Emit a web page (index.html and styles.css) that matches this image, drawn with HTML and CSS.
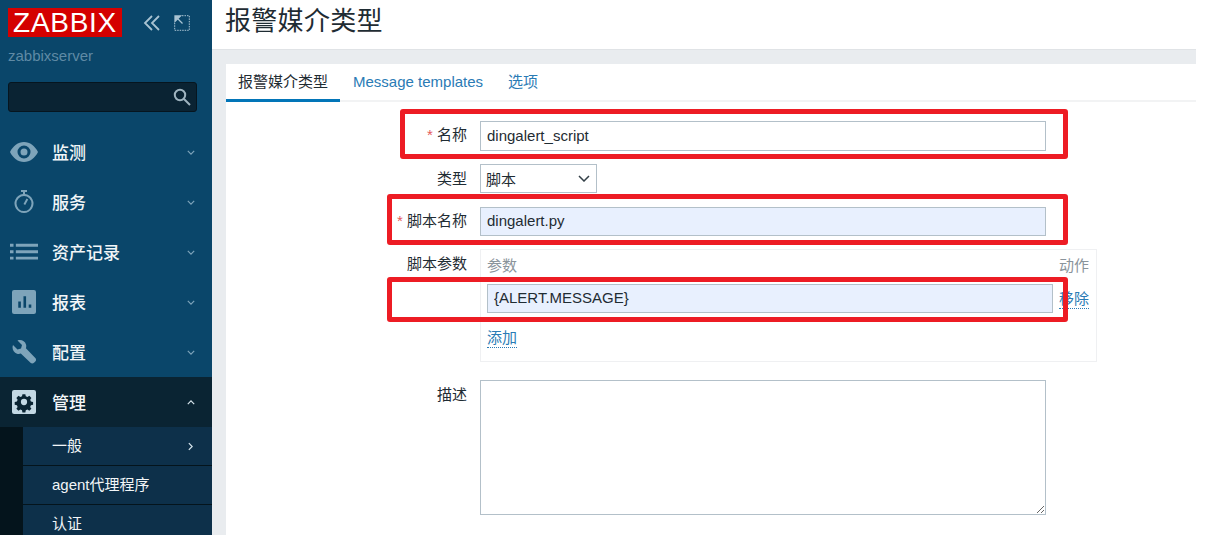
FILE: index.html
```html
<!DOCTYPE html>
<html lang="zh-CN">
<head>
  <meta charset="UTF-8" />
  <meta name="viewport" content="width=device-width, initial-scale=1.0" />
  <title>报警媒介类型</title>
  <link rel="stylesheet" href="styles.css">
</head>
<body>
  <aside class="sidebar">
    <div class="brand">
      <div class="logo">ZABBIX</div>
      <svg class="tool-icon chevrons" viewBox="0 0 18 18"><path d="M9 2 2 9l7 7M16 2 9 9l7 7" /></svg>
      <svg class="tool-icon expand" viewBox="0 0 16 16">
        <path class="dotted" d="M8 .7h7.3V15.3H.7V8" />
        <path class="solid" d="M1 1h5.500L1 6.500zM4 4l4.500 4.500" />
      </svg>
    </div>
    <div class="server">zabbixserver</div>
    <div class="search">
      <svg viewBox="0 0 18 18"><circle cx="7" cy="7" r="5.200" /><path d="m11 11 6 6" /></svg>
    </div>

    <nav class="menu">
      <a class="menu-item">
        <svg class="menu-icon" viewBox="0 0 28 20"><path fill-rule="evenodd" d="M14 0c6 0 11 4 14 10-3 6-8 10-14 10S3 16 0 10C3 4 8 0 14 0Zm0 3.500a6.500 6.500 0 1 0 0 13 6.500 6.500 0 0 0 0-13Zm0 3a3.500 3.500 0 1 1 0 7 3.500 3.500 0 0 1 0-7Z" /></svg>
        <span>监测</span>
        <svg class="caret" viewBox="0 0 10 6"><path d="m1 1 4 4 4-4" /></svg>
      </a>
      <a class="menu-item">
        <svg class="menu-icon" viewBox="0 0 22 24"><path fill-rule="evenodd" d="M8 0h6v2h-2v2.100a9.500 9.500 0 1 1-2 0V2H8Zm3 6.100a7.500 7.500 0 1 0 0 15 7.500 7.500 0 0 0 0-15Zm2.500 2.500 1.700 1-3 5.300-1.700-1Z" /></svg>
        <span>服务</span>
        <svg class="caret" viewBox="0 0 10 6"><path d="m1 1 4 4 4-4" /></svg>
      </a>
      <a class="menu-item">
        <svg class="menu-icon" viewBox="0 0 24 14"><path d="M0 0h3v2.500H0zM5 0h19v2.500H5zM0 5.500h3V8H0zM5 5.500h19V8H5zM0 11h3v2.500H0zM5 11h19v2.500H5z" /></svg>
        <span>资产记录</span>
        <svg class="caret" viewBox="0 0 10 6"><path d="m1 1 4 4 4-4" /></svg>
      </a>
      <a class="menu-item">
        <svg class="menu-icon" viewBox="0 0 23 23"><path fill-rule="evenodd" d="M2 0h19a2 2 0 0 1 2 2v19a2 2 0 0 1-2 2H2a2 2 0 0 1-2-2V2a2 2 0 0 1 2-2Zm4 11v6h2.500v-6Zm5-5v11h2.500V6Zm5 8v3h2.500v-3Z" /></svg>
        <span>报表</span>
        <svg class="caret" viewBox="0 0 10 6"><path d="m1 1 4 4 4-4" /></svg>
      </a>
      <a class="menu-item">
        <svg class="menu-icon" viewBox="0 0 24 24"><path d="M1 5 5.500 9.500 9 8.500l1-3.500L5.500.5C9-.8 13 1 14 4.500c.4 1.300.3 2.600-.1 3.700L23.300 18c1 1 1 2.500 0 3.500l-1.300 1.300c-1 1-2.500 1-3.500 0L8.800 13.500C7.600 14 6.200 14 5 13.700 1.500 12.600-.4 8.700 1 5Z" /></svg>
        <span>配置</span>
        <svg class="caret" viewBox="0 0 10 6"><path d="m1 1 4 4 4-4" /></svg>
      </a>
      <a class="menu-item active">
        <svg class="menu-icon" viewBox="0 0 23 23"><path fill-rule="evenodd" d="M2 0h19a2 2 0 0 1 2 2v19a2 2 0 0 1-2 2H2a2 2 0 0 1-2-2V2a2 2 0 0 1 2-2Zm8 4-.4 2.100-1.600.7-1.800-1.200-2 2 1.200 1.800-.7 1.600-2.100.4v2.800l2.100.4.7 1.600-1.200 1.800 2 2 1.800-1.200 1.600.7.400 2.100h2.800l.4-2.100 1.600-.7 1.800 1.200 2-2-1.200-1.800.7-1.600 2.100-.4v-2.800l-2.100-.4-.7-1.600 1.200-1.800-2-2-1.800 1.200-1.600-.7L12.800 4Zm1.500 4.500a3 3 0 1 1 0 6 3 3 0 0 1 0-6Z" /></svg>
        <span>管理</span>
        <svg class="caret" viewBox="0 0 10 6"><path d="m1 5 4-4 4 4" /></svg>
      </a>
      <div class="submenu">
        <a class="sub-item">一般<svg class="caret-right" viewBox="0 0 6 10"><path d="m1 1 4 4-4 4" /></svg></a>
        <a class="sub-item">agent代理程序</a>
        <a class="sub-item">认证</a>
      </div>
    </nav>
  </aside>

  <main class="main">
    <header class="page-header"><h1>报警媒介类型</h1></header>
    <div class="content">
      <section class="panel">
        <div class="tabs">
          <a class="tab active">报警媒介类型</a>
          <a class="tab">Message templates</a>
          <a class="tab">选项</a>
        </div>
        <form class="form">
          <label class="row-label"><i>*</i> 名称</label>
          <input class="field name-field" type="text" value="dingalert_script" />

          <label class="row-label type-label">类型</label>
          <div class="field type-field">
            <span>脚本</span>
            <svg viewBox="0 0 12 7"><path d="m1 1 5 5 5-5" /></svg>
          </div>

          <label class="row-label"><i>*</i> 脚本名称</label>
          <input class="field filled" type="text" value="dingalert.py" />

          <label class="row-label params-label">脚本参数</label>
          <div class="params">
            <div class="params-head"><span>参数</span><span>动作</span></div>
            <div class="params-row">
              <input class="field filled" type="text" value="{ALERT.MESSAGE}" />
              <a class="link">移除</a>
            </div>
            <a class="link add-link">添加</a>
          </div>

          <label class="row-label desc-label">描述</label>
          <textarea class="field desc"></textarea>
        </form>
      </section>
    </div>
  </main>

  <!-- annotations drawn over the screenshot -->
  <div class="mark mark-name"></div>
  <div class="mark mark-script"></div>
  <div class="mark mark-param"></div>
</body>
</html>
```

FILE: styles.css
```css
* {
  box-sizing: border-box;
}
html, body {
  height: 100%;
}
body {
  margin: 0;
  display: flex;
  overflow: hidden;
  background: white;
  color: #1f2c33;
  font-family: "Liberation Sans", "Noto Sans CJK SC", sans-serif;
  font-size: 15px;
}

/* sidebar */
.sidebar {
  flex: 0 0 212px;
  background: #0a466a;
  color: #f2f6f8;
}
.brand {
  display: flex;
  align-items: flex-start;
  padding: 8px 0 0 8px;
}
.logo {
  width: 114px;
  height: 29px;
  background: #d40000;
  color: white;
  font-size: 28px;
  line-height: 30px;
  letter-spacing: 0.7px;
  text-align: center;
}
.tool-icon {
  fill: none;
  stroke: #a9c3d2;
}
.chevrons {
  width: 18px;
  height: 18px;
  margin: 6px 0 0 21px;
  stroke-width: 1.800;
}
.expand {
  width: 16px;
  height: 16px;
  margin: 7px 0 0 13px;
}
.expand .dotted {
  stroke-dasharray: 1.500 1;
}
.expand .solid {
  fill: #a9c3d2;
  stroke-width: 1.300;
}
.server {
  margin: 9px 0 0 8px;
  color: #5f8aa5;
  font-size: 15px;
  line-height: 20px;
}
.search {
  display: flex;
  justify-content: flex-end;
  align-items: center;
  width: 189px;
  height: 30px;
  margin: 16px 0 0 8px;
  padding-right: 5px;
  background: #0a2333;
  border: 1px solid #06151f;
  border-radius: 3px;
}
.search svg {
  width: 18px;
  height: 18px;
  fill: none;
  stroke: #9fb4c0;
  stroke-width: 2;
}
.menu {
  margin-top: 15px;
}
.menu-item {
  display: flex;
  align-items: center;
  height: 50px;
  padding: 0 17px 0 0;
  font-size: 17px;
}
.menu-item span {
  flex: 1;
  padding-bottom: 2px;
  font-weight: 500;
}
.menu-icon {
  flex: none;
  width: 28px;
  height: 24px;
  margin: 0 14px 0 10px;
  fill: #7ea4ba;
}
.menu-item.active {
  background: #0a2433;
}
.menu-item.active .menu-icon {
  fill: #c3d8e4;
}
.caret {
  width: 8px;
  height: 5px;
  fill: none;
  stroke: #7ea4ba;
  stroke-width: 1.500;
}
.menu-item.active .caret {
  stroke: #d5e3eb;
}
.submenu {
  padding-left: 23px;
  background: #04141c;
}
.sub-item {
  display: flex;
  align-items: center;
  justify-content: space-between;
  height: 39px;
  padding: 0 19px 3px 29px;
  background: #0d304a;
  border-bottom: 1px solid #04141c;
  font-size: 15px;
}
.caret-right {
  width: 5px;
  height: 9px;
  margin-top: 4px;
  fill: none;
  stroke: #d5e3eb;
  stroke-width: 1.500;
}

/* main area */
.main {
  flex: 1;
  display: flex;
  flex-direction: column;
  min-width: 0;
}
.page-header {
  height: 49px;
  padding-left: 13px;
}
h1 {
  margin: 0;
  font-size: 26px;
  font-weight: 400;
  line-height: 43px;
  letter-spacing: 0.3px;
}
.content {
  flex: 1;
  width: 984px;
  padding: 14px 0 0 14px;
  background: #e9ecef;
  border-top: 1px solid #e0e3e6;
}
.panel {
  height: 100%;
  background: white;
}
.tabs {
  display: flex;
  height: 38px;
  border-bottom: 2px solid #f2f3f4;
}
.tab {
  height: 38px;
  padding: 0 12px;
  color: #2a7bb5;
  font-size: 15px;
  line-height: 35px;
}
.tab.active {
  color: #1f2c33;
  border-bottom: 3px solid #0275b8;
}
.tab + .tab {
  margin-left: 1px;
}

/* form */
.form {
  display: grid;
  grid-template-columns: 241px 1fr;
  column-gap: 13px;
  row-gap: 13px;
  padding-top: 19px;
  align-items: start;
}
.row-label {
  text-align: right;
  line-height: 27px;
}
.row-label i {
  color: #e45959;
  font-style: normal;
}
.type-label {
  line-height: 29px;
}
.params-label {
  line-height: 29px;
}
.field {
  display: block;
  width: 566px;
  height: 29px;
  padding: 0 6px 2px;
  background: white;
  border: 1px solid #b3c0c9;
  border-radius: 0;
  color: #1f2c33;
  font-family: inherit;
  font-size: 15px;
  outline: none;
}
.name-field {
  height: 30px;
}
.type-field {
  display: flex;
  align-items: center;
  justify-content: space-between;
  width: 117px;
  margin-bottom: 1px;
  padding: 0 6px 0 5px;
}
.type-field svg {
  width: 12px;
  height: 7px;
  fill: none;
  stroke: #333f47;
  stroke-width: 1.500;
}
.filled {
  background: #e8f0fe;
}
.params {
  width: 617px;
  height: 113px;
  padding: 7px 7px 0 6px;
  border: 1px solid #eff0f2;
}
.params-head {
  display: flex;
  justify-content: space-between;
  color: #8a949b;
  line-height: 18px;
}
.params-row {
  display: flex;
  align-items: center;
  justify-content: space-between;
  margin-top: 9px;
}
.params-row .field {
  width: 566px;
}
.link {
  color: #2a7bb5;
  border-bottom: 1px dotted #2a7bb5;
  line-height: 19px;
}
.add-link {
  display: inline-block;
  margin-top: 15px;
}
.desc-label {
  margin-top: 6px;
}
.desc {
  height: 135px;
  margin-top: 5px;
  resize: both;
}

/* red boxes */
.mark {
  position: absolute;
  left: 387px;
  width: 681px;
  border: 5px solid #ed1c24;
  border-radius: 3px;
}
.mark-name {
  left: 400px;
  width: 668px;
  top: 109px;
  height: 50px;
}
.mark-script {
  top: 194px;
  height: 51px;
}
.mark-param {
  top: 277px;
  height: 45px;
}
```
